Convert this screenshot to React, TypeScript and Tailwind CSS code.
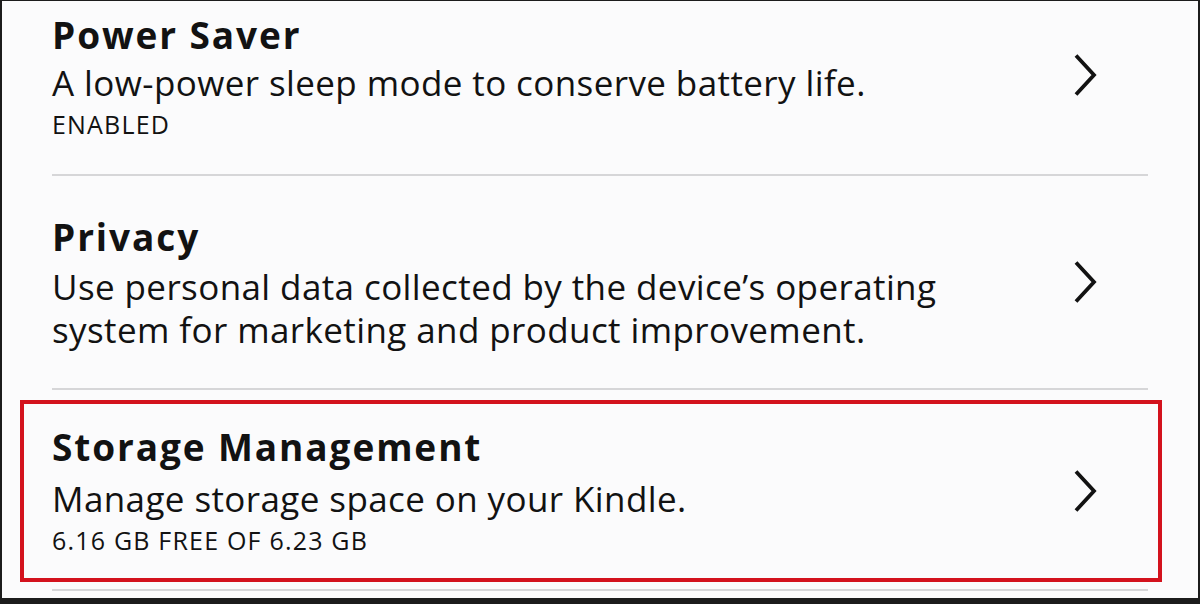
import React from 'react'

const Chevron: React.FC = () => (
  <svg width="24" height="42" viewBox="0 0 24 42" fill="none" className="shrink-0">
    <polyline points="3,1.5 21,21 3,40.5" stroke="#121212" strokeWidth="3.8" strokeLinejoin="miter" />
  </svg>
)

const font = { fontFamily: '"Open Sans", "Noto Sans", sans-serif' }

const App: React.FC = () => {
  return (
    <div
      className="w-[1200px] h-[604px] overflow-hidden bg-[#fbfbfc] border-t border-l-2 border-r-2 border-b-[6px] border-[#1c1c1c] text-[#121212]"
      style={font}
    >
      {/* Power Saver */}
      <div className="mx-[50px] h-[175px] border-b-2 border-[#d6d6d8] flex items-start justify-between">
        <div className="flex flex-col pt-[12px]">
          <h3 className="text-[37px] leading-[44px] font-bold tracking-[1.9px]">Power Saver</h3>
          <p className="text-[35px] leading-[44px] tracking-[0.4px] mt-[4px]">A low-power sleep mode to conserve battery life.</p>
          <span className="text-[25px] leading-[34px] tracking-[1.2px] mt-[2px]">ENABLED</span>
        </div>
        <div className="mr-[51px] mt-[53px]">
          <Chevron />
        </div>
      </div>

      {/* Privacy */}
      <div className="mx-[50px] h-[214px] border-b-2 border-[#d6d6d8] flex items-start justify-between">
        <div className="flex flex-col pt-[39px]">
          <h3 className="text-[37px] leading-[44px] font-bold tracking-[1.9px]">Privacy</h3>
          <p className="text-[35px] leading-[43px] tracking-[0.4px] mt-[6px]">
            Use personal data collected by the device’s operating
            <br />
            system for marketing and product improvement.
          </p>
        </div>
        <div className="mr-[51px] mt-[85px]">
          <Chevron />
        </div>
      </div>

      {/* Storage Management (highlighted) */}
      <div className="ml-[18px] mr-[36px] mt-[10px] h-[182px] border-4 border-[#d3121d] flex items-start justify-between">
        <div className="flex flex-col pl-[28px] pt-[21px]">
          <h3 className="text-[37px] leading-[44px] font-bold tracking-[1.9px]">Storage Management</h3>
          <p className="text-[35px] leading-[44px] tracking-[0.4px] mt-[8px]">Manage storage space on your Kindle.</p>
          <span className="text-[25px] leading-[34px] tracking-[1.2px] mt-[2px]">6.16 GB FREE OF 6.23 GB</span>
        </div>
        <div className="mr-[61px] mt-[66px]">
          <Chevron />
        </div>
      </div>

      <div className="mx-[50px] mt-[7px] border-b-2 border-[#d6d6d8]" />
    </div>
  )
}

export default App
